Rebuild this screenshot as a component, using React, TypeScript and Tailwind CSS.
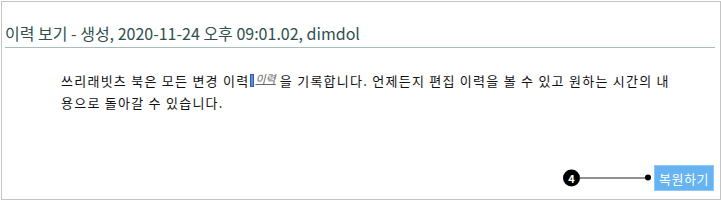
import React from 'react'

const font = { fontFamily: '"Noto Sans CJK KR", "Noto Sans", sans-serif' }

export default function App() {
  return (
    <div className="w-[721px] h-[200px] bg-white pt-px pl-px" style={font}>
      <div className="w-[720px] h-[199px] border border-[#c4c4c4] flex flex-col">
        {/* header */}
        <div className="ml-[3px] mr-[5px] mt-[19px] border-b border-[#a9bcbc] pb-[2px]">
          <h2 className="text-[16px] leading-6 text-[#2f4f4f]">
            이력 보기 - 생성, 2020-11-24 오후 09:01.02, dimdol
          </h2>
        </div>

        {/* description */}
        <p className="ml-[59px] mt-[22px] w-[618px] text-[13px] leading-[21px] text-[#111] tracking-[1.25px]">
          쓰리래빗츠 북은 모든 변경 이력
          <span className="inline-block w-[4px] h-[13px] bg-[#5b8fd6] border border-[#2f5fa8] align-[-1px] mx-px"></span>
          <span className="italic underline text-[11px] text-[#666] relative -top-[3px] tracking-normal">이력</span>{' '}
          을 기록합니다. 언제든지 편집 이력을 볼 수 있고 원하는 시간의 내용으로 돌아갈 수 있습니다.
        </p>

        {/* footer */}
        <div className="mt-auto mb-[8px] mr-[6px] flex justify-end">
          <div className="relative">
            <div className="absolute right-[63px] top-1/2 -translate-y-1/2 flex items-center">
              <span className="w-[17px] h-[17px] rounded-full bg-black text-white text-[11px] font-bold flex items-center justify-center leading-none">
                4
              </span>
              <span className="w-[68px] h-px bg-[#222]"></span>
              <span className="w-[6px] h-[6px] rounded-full bg-black -ml-[3px]"></span>
            </div>
            <button className="h-[26px] w-[60px] bg-[#66b3f2] border border-[#8ec9f7] text-white text-[13px] leading-none tracking-[0.5px]">
              복원하기
            </button>
          </div>
        </div>
      </div>
    </div>
  )
}
